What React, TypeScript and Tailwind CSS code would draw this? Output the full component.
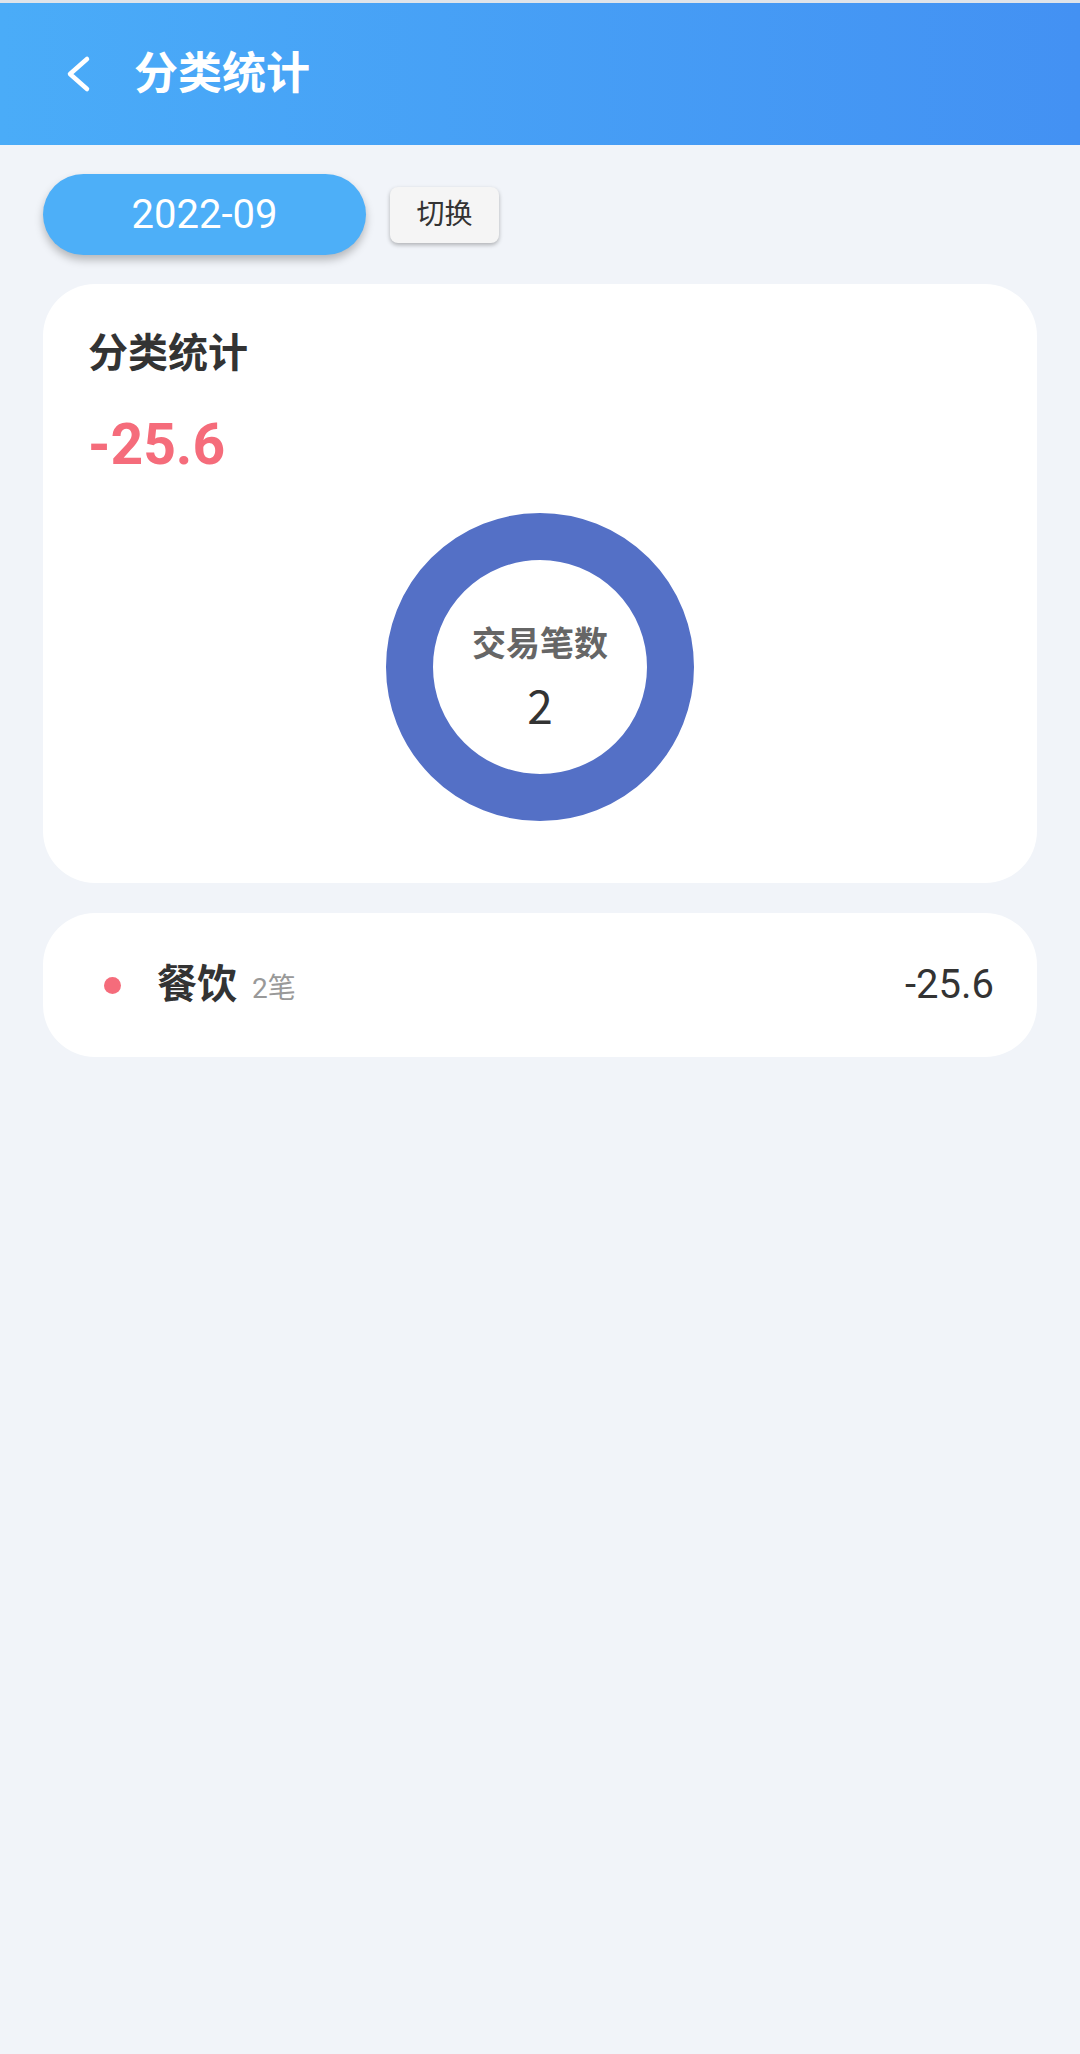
import React from "react";

const cjk = "font-['Roboto','Noto_Sans_CJK_SC',sans-serif]";

function BackIcon() {
  return (
    <svg width="30" height="38" viewBox="0 0 30 38" fill="none">
      <path d="M24 4 L7 19 L24 34" stroke="white" strokeWidth="4.5" strokeLinecap="round" strokeLinejoin="round" />
    </svg>
  );
}

function Donut({ count }: { count: number }) {
  return (
    <div className="w-[308px] h-[308px] rounded-full border-[47px] border-[#5470c6] flex flex-col items-center pt-[62px]">
      <span className="text-[34px] leading-[40px] font-bold text-[#666] font-['Noto_Sans_CJK_SC',sans-serif]">
        交易笔数
      </span>
      <span className="mt-[16px] text-[46px] leading-[52px] text-[#333] font-['Noto_Sans_CJK_SC',sans-serif]">
        {count}
      </span>
    </div>
  );
}

export default function App() {
  const items = [{ name: "餐饮", count: 2, amount: "-25.6", color: "bg-[#f56c7b]" }];

  return (
    <div className={`w-full min-h-[2054px] bg-[#f1f4f9] ${cjk}`}>
      <div className="h-[3px] bg-[#dfe4ea]" />
      {/* header */}
      <div className="h-[142px] bg-gradient-to-r from-[#4aacf8] to-[#4391f3] flex items-center pl-[63px]">
        <BackIcon />
        <h1 className="ml-[41px] text-[44px] font-bold text-white leading-none">分类统计</h1>
      </div>

      <div className="px-[43px]">
        {/* month picker */}
        <div className="flex items-center pt-[29px]">
          <div className="w-[323px] h-[81px] rounded-full bg-[#4daff8] shadow-[0_5px_8px_rgba(0,0,0,0.25)] flex items-center justify-center">
            <span className="text-[40px] text-white font-['Roboto',sans-serif]">2022-09</span>
          </div>
          <button className="ml-[24px] w-[109px] h-[56px] rounded-[8px] bg-[#f5f5f5] shadow-[0_2px_4px_rgba(0,0,0,0.28)] text-[28px] text-[#333] flex items-center justify-center">
            切换
          </button>
        </div>

        {/* summary card */}
        <div className="mt-[29px] h-[599px] bg-white rounded-[52px] pt-[44px] px-[45px] flex flex-col">
          <h2 className="text-[40px] leading-[52px] font-bold text-[#333]">分类统计</h2>
          <div className="mt-[29px] text-[57px] leading-[72px] font-bold text-[#f56c7b] font-['Roboto',sans-serif]">
            -25.6
          </div>
          <div className="mt-[32px] flex justify-center">
            <Donut count={2} />
          </div>
        </div>

        {/* category list */}
        {items.map((it) => (
          <div
            key={it.name}
            className="mt-[30px] h-[144px] bg-white rounded-[52px] pl-[61px] pr-[43px] flex items-center"
          >
            <span className={`w-[17px] h-[17px] rounded-full ${it.color}`} />
            <div className="ml-[36px] flex items-baseline flex-1">
              <span className="text-[40px] font-bold text-[#333]">{it.name}</span>
              <span className="ml-[15px] text-[28px] text-[#999]">{it.count}笔</span>
            </div>
            <span className="text-[40px] text-[#333] font-['Roboto',sans-serif]">{it.amount}</span>
          </div>
        ))}
      </div>
    </div>
  );
}
